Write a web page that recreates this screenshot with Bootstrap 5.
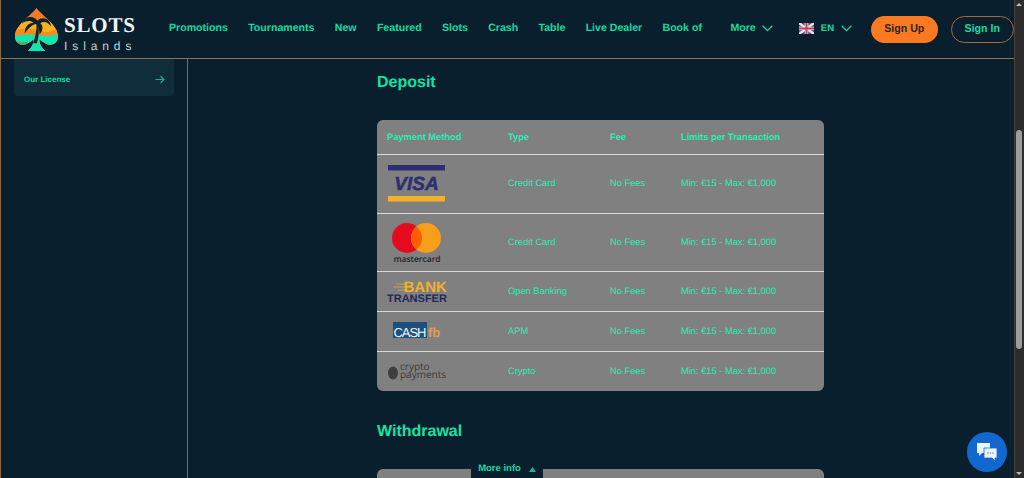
<!DOCTYPE html>
<html lang="en">
<head>
  <meta charset="UTF-8" />
  <title>Slots Islands - Payments</title>
  <link href="https://cdn.jsdelivr.net/npm/bootstrap@5.3.0/dist/css/bootstrap.min.css" rel="stylesheet" />
  <style>
    html, body { height: 478px; overflow: hidden; }
    body { background: #0a1f2d; font-family: "Liberation Sans", Arial, sans-serif; color: #14e3a6; text-rendering: geometricPrecision; }
    .page-wrap { height: 478px; position: relative; overflow: hidden; }
    .page-main { width: 1014px; border-left: 1px solid #8f6647; }

    /* top bar */
    .top-bar { height: 59px; border-bottom: 1px solid #8f6f55; padding-left: 13px; }
    .brand-mark { width: 45px; height: 45px; }
    .brand-name { width: 75px; margin-left: 5px; line-height: 1; padding-top: 7.5px; }
    .brand-slots { font: 700 21px "Liberation Serif", serif; color: #eef3f3; letter-spacing: .8px; }
    .brand-sub { font: 400 12px "Liberation Sans", sans-serif; color: #c9d2d4; letter-spacing: 4.9px; margin-top: .5px; white-space: nowrap; }
    .top-links { margin-left: 30px; gap: 20.3px; }
    .top-links a { font-size: 10.6px; font-weight: 700; color: #14dba0; text-decoration: none; white-space: nowrap; }
    .more-link { margin-left: 28.500px; gap: 6px; font-size: 10.6px; font-weight: 700; color: #14dba0; }
    .lang-link { margin-left: 26px; gap: 7px; font-size: 9.6px; font-weight: 700; color: #14dba0; }
    .btn-join { width: 67px; height: 27px; margin-left: 19px; padding: 0; border-radius: 14px; border: 0; background: #fb7a21; color: #2a2422; font-size: 10.6px; font-weight: 700; }
    .btn-login { width: 64px; height: 27px; margin-left: 13px; padding: 0; border-radius: 14px; border: 1px solid #a8693a; background: transparent; color: #14dba0; font-size: 10.6px; font-weight: 700; }

    /* side column */
    .side-col { width: 187px; height: 419px; border-right: 1px solid #8f6647; flex: none; padding: 0 13px; }
    .side-item { height: 37px; padding: 4px 9px 0 10px; background: #0f2d3a; border-radius: 0 0 3px 3px; font-size: 8px; font-weight: 700; color: #14dba0; }

    /* content */
    .content-col { width: 447px; margin-left: 189px; }
    .pay-title { font-size: 16px; font-weight: 700; line-height: 20px; color: #14e3a6; margin: 0; }
    .first-title { margin-top: 14px; margin-bottom: 27px; }
    .next-title { margin-top: 31px; margin-bottom: 27px; }
    .pay-box { background: #808080; border-radius: 6px; overflow: hidden; }
    .pay-stub { height: 9px; border-radius: 6px 6px 0 0; }
    .pay-box .table { --bs-table-bg: transparent; --bs-table-color: #28eeb4; margin: 0; table-layout: fixed; font-size: 9.3px; }
    .pay-box th, .pay-box td { padding: 1px 0 0 10px; vertical-align: middle; border-bottom: 1px solid #d9d9d9; font-weight: 400; }
    .pay-box th { padding-top: 2px; font-weight: 700; height: 34px; color: #28eeb4; }
    .pay-box tr:last-child td { border-bottom: 0; }
    .row-tall td { height: 58px; }
    .row-tall:first-child td { height: 59px; }
    .row-short td { height: 40px; }
    .pay-logo { display: block; }

    /* floating things */
    .more-tab { position: absolute; left: 471px; top: 461px; width: 72px; height: 17px; background: #0a1f2d; font-size: 9.5px; font-weight: 700; color: #14dba0; gap: 8px; }
    .chat-btn { position: absolute; left: 967px; top: 432px; width: 40px; height: 40px; border-radius: 50%; background: #1268cf; }
    .fake-scroll { position: absolute; right: 0; top: 0; width: 10px; height: 478px; background: #2c2c2c; border-left: 1px solid #4a3f39; }
    .scroll-thumb { position: absolute; left: 1px; top: 130px; width: 6px; height: 219px; border-radius: 3px; background: #9d9d9d; }
    .scroll-up, .scroll-down { position: absolute; left: 1px; width: 0; height: 0; border-left: 3px solid transparent; border-right: 3px solid transparent; }
    .scroll-up { top: 3px; border-bottom: 3px solid #bbb; }
    .scroll-down { bottom: 3px; border-top: 3px solid #bbb; }
  </style>
</head>
<body>
  <div class="page-wrap">
    <div class="page-main">

      <!-- Top bar -->
      <nav class="top-bar d-flex align-items-center">
        <svg class="brand-mark flex-shrink-0" viewBox="0 0 46 46">
          <defs>
            <clipPath id="spadeClip">
              <path d="M23 1 C29 9 45 19 45 30 C45 37 39 40 34 38 C31 37 28 35 26 33 C26 38 28 42 32 45 L14 45 C18 42 20 38 20 33 C18 35 15 37 12 38 C7 40 1 37 1 30 C1 19 17 9 23 1Z"/>
            </clipPath>
          </defs>
          <g clip-path="url(#spadeClip)">
            <rect width="46" height="46" fill="#f47b26"/>
            <path d="M0 17 Q12 8 24 13 T46 9 V26 H0Z" fill="#fbb11f"/>
            <path d="M0 24 Q12 20 24 24 T46 21 V32 H0Z" fill="#f58a1e"/>
            <path d="M0 30 Q12 27 24 29 T46 27 V46 H0Z" fill="#12e6b0"/>
            <path d="M0 34 Q8 38 14 35 V46 H0Z" fill="#6b9a5a"/>
          </g>
          <path d="M22.500 14 C24 22 22 30 19.500 37 L23.500 37 C25.500 30 26 22 24.500 14Z" fill="#10222c"/>
          <path d="M24 14 C20 8 11 9 8 17 C13 13.500 17 14 20 16 C15 16 11 20 11 27 C15 21 19 18 23 17.500 C25 20 26 23 26 28 C30 24 30 19 27 16.500 C31 14 35 16 38 20 C37 12 29 9 24 14Z" fill="#10222c"/>
        </svg>
        <div class="brand-name flex-shrink-0">
          <div class="brand-slots">SLOTS</div>
          <div class="brand-sub">Islands</div>
        </div>
        <div class="top-links d-flex align-items-center">
          <a href="#">Promotions</a>
          <a href="#">Tournaments</a>
          <a href="#">New</a>
          <a href="#">Featured</a>
          <a href="#">Slots</a>
          <a href="#">Crash</a>
          <a href="#">Table</a>
          <a href="#">Live Dealer</a>
          <a href="#">Book of</a>
        </div>
        <div class="more-link d-flex align-items-center">
          More
          <svg width="11" height="7" viewBox="0 0 11 7"><path d="M.7.8 5.500 5.600 10.300.8" fill="none" stroke="#14dba0" stroke-width="1.300"/></svg>
        </div>
        <div class="lang-link d-flex align-items-center">
          <svg width="15" height="11" viewBox="0 0 15 11">
            <rect width="15" height="11" fill="#4a4f86"/>
            <path d="M0 0 15 11M15 0 0 11" stroke="#e8e4ea" stroke-width="2.400"/>
            <path d="M7.500 0V11M0 5.500H15" stroke="#e8e4ea" stroke-width="3.600"/>
            <path d="M7.500 0V11M0 5.500H15" stroke="#c2415a" stroke-width="2"/>
          </svg>
          EN
          <svg width="11" height="7" viewBox="0 0 11 7"><path d="M.7.8 5.500 5.600 10.300.8" fill="none" stroke="#14dba0" stroke-width="1.300"/></svg>
        </div>
        <button class="btn-join" type="button">Sign Up</button>
        <button class="btn-login" type="button">Sign In</button>
      </nav>

      <div class="d-flex">
        <!-- Side menu -->
        <aside class="side-col">
          <div class="side-item d-flex align-items-center justify-content-between">
            Our License
            <svg width="10" height="9" viewBox="0 0 10 9"><path d="M.5 4.500H9M5.500 1 9 4.500 5.500 8" fill="none" stroke="#1fae8e" stroke-width="1.100"/></svg>
          </div>
        </aside>

        <!-- Payment tables -->
        <main class="content-col">
          <h2 class="pay-title first-title">Deposit</h2>
          <div class="pay-box">
            <table class="table">
              <colgroup><col style="width:121px"><col style="width:102px"><col style="width:71px"><col></colgroup>
              <thead>
                <tr><th>Payment Method</th><th>Type</th><th>Fee</th><th>Limits per Transaction</th></tr>
              </thead>
              <tbody>
                <tr class="row-tall">
                  <td>
                    <svg class="pay-logo" width="60" height="38" viewBox="0 0 60 38">
                      <rect x="1" y="0" width="57" height="5.500" fill="#2e2f73"/>
                      <text x="29.500" y="25" text-anchor="middle" font-family="Liberation Sans" font-size="19" font-weight="700" font-style="italic" fill="#2e2f73" stroke="#2e2f73" stroke-width=".5">VISA</text>
                      <rect x="1" y="31" width="57" height="5.500" fill="#f3b02a"/>
                    </svg>
                  </td>
                  <td>Credit Card</td><td>No Fees</td><td>Min: €15 - Max: €1,000</td>
                </tr>
                <tr class="row-tall">
                  <td>
                    <svg class="pay-logo" width="60" height="42" viewBox="0 0 60 42">
                      <circle cx="20" cy="16" r="15" fill="#e60a1f"/>
                      <circle cx="39" cy="16" r="15" fill="#f79e1b"/>
                      <path d="M29.500 4.400a15 15 0 0 1 0 23.200a15 15 0 0 1 0-23.200Z" fill="#ff5f00"/>
                      <text x="30" y="40" text-anchor="middle" font-family="Open Sans" font-size="8.500" font-weight="600" fill="#222">mastercard</text>
                    </svg>
                  </td>
                  <td>Credit Card</td><td>No Fees</td><td>Min: €15 - Max: €1,000</td>
                </tr>
                <tr class="row-short">
                  <td>
                    <svg class="pay-logo" width="62" height="26" viewBox="0 0 62 26">
                      <path d="M9 5H19M6 8H18M11 11H18" stroke="#d3a55a" stroke-width=".8"/>
                      <text font-family="Liberation Sans" font-weight="700"><tspan x="16.500" y="13" font-size="15" fill="#f3b02a">BANK</tspan><tspan x="0" y="23" font-size="11" fill="#1d2a5e">TRANSFER</tspan></text>
                    </svg>
                  </td>
                  <td>Open Banking</td><td>No Fees</td><td>Min: €15 - Max: €1,000</td>
                </tr>
                <tr class="row-short">
                  <td>
                    <svg class="pay-logo" width="60" height="20" viewBox="0 0 60 20">
                      <rect x="6" y="0" width="34" height="16" fill="#1f4f7d"/>
                      <text x="6.500" y="15" textLength="33" font-family="Liberation Sans" font-size="13" fill="#f4f6f8">CASH</text>
                      <text x="41" y="15" font-family="Liberation Sans" font-size="13" font-weight="700" fill="#e59a55">fb</text>
                    </svg>
                  </td>
                  <td>APM</td><td>No Fees</td><td>Min: €15 - Max: €1,000</td>
                </tr>
                <tr class="row-short">
                  <td>
                    <svg class="pay-logo" width="62" height="24" viewBox="0 0 62 24">
                      <ellipse cx="6" cy="13" rx="5" ry="6.500" fill="#3e3e3e"/>
                      <text font-family="Open Sans" font-size="10" fill="#3a3a3a"><tspan x="13" y="9.500">crypto</tspan><tspan x="13" y="17.500">payments</tspan></text>
                    </svg>
                  </td>
                  <td>Crypto</td><td>No Fees</td><td>Min: €15 - Max: €1,000</td>
                </tr>
              </tbody>
            </table>
          </div>

          <h2 class="pay-title next-title">Withdrawal</h2>
          <div class="pay-box pay-stub"></div>
        </main>
      </div>
    </div>

    <!-- Overlays -->
    <div class="more-tab d-flex align-items-center justify-content-center">
      More info
      <svg width="7" height="5" viewBox="0 0 7 5"><path d="M3.500 0 7 5H0Z" fill="#14b98c"/></svg>
    </div>
    <div class="chat-btn d-flex align-items-center justify-content-center">
      <svg width="22" height="20" viewBox="0 0 22 20">
        <path d="M1 1H14V11H6L3 14V11H1Z" fill="#eef4fb"/>
        <path d="M8 6H21V16H19V19L16 16H8Z" fill="#eef4fb" stroke="#1268cf" stroke-width=".8"/>
        <circle cx="12" cy="11" r=".8" fill="#6a8fb8"/><circle cx="14.500" cy="11" r=".8" fill="#6a8fb8"/><circle cx="17" cy="11" r=".8" fill="#6a8fb8"/>
      </svg>
    </div>
    <div class="fake-scroll">
      <div class="scroll-up"></div>
      <div class="scroll-thumb"></div>
      <div class="scroll-down"></div>
    </div>
  </div>

  <script src="https://cdn.jsdelivr.net/npm/bootstrap@5.3.0/dist/js/bootstrap.bundle.min.js"></script>
</body>
</html>
